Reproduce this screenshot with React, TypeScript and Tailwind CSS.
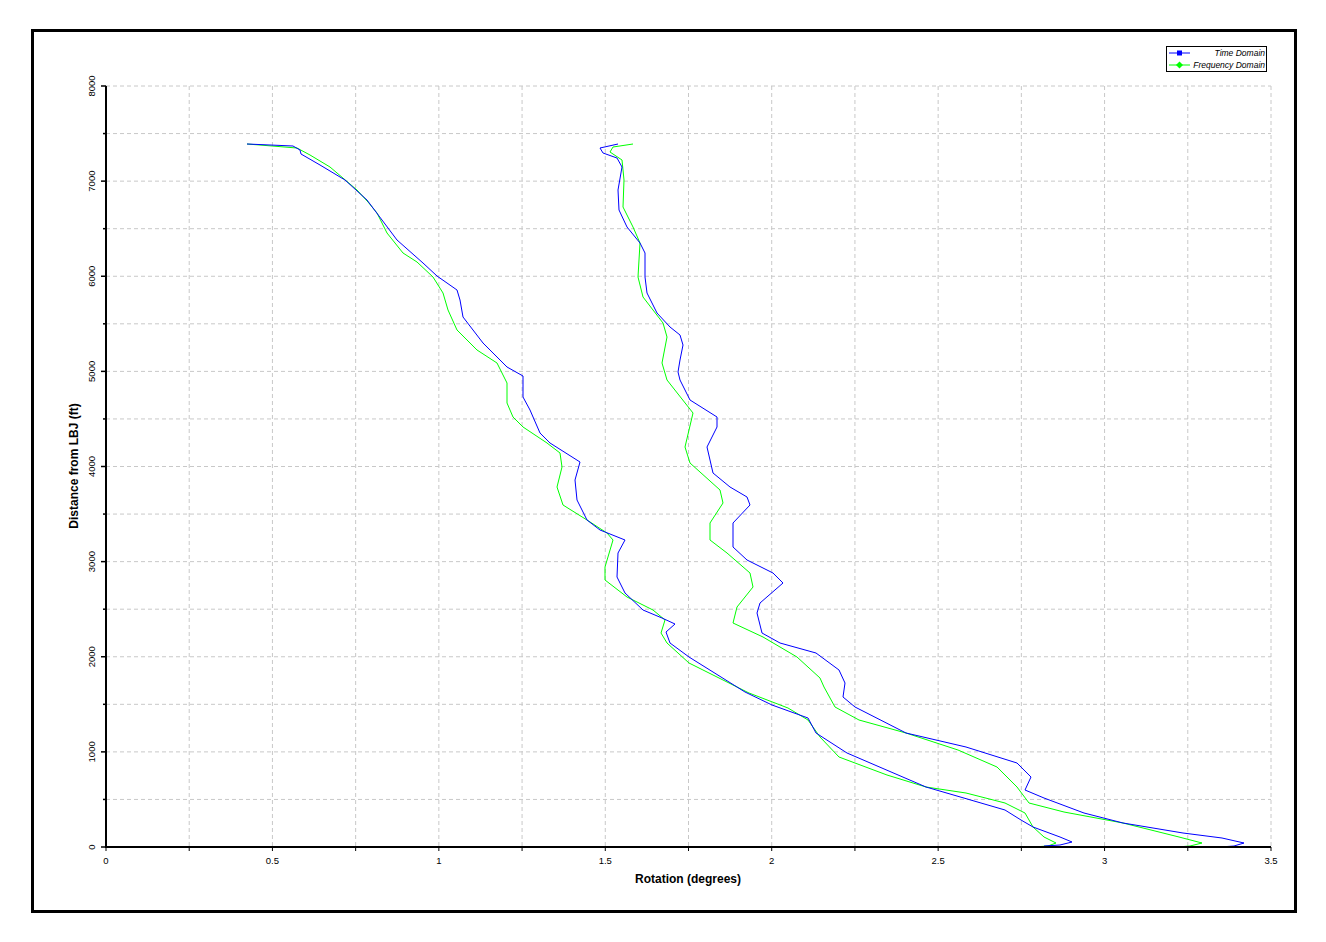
import React from "react";

const X0 = 106, X1 = 1271, Y0 = 847, Y1 = 86;
const xp = (v: number) => X0 + (v / 3.5) * (X1 - X0);
const yp = (v: number) => Y0 - (v / 8000) * (Y0 - Y1);

const blueL = "247,144 293,146 300,150 301,154 320,165 345,180 367,200 382,220 397,240 423,263 437,276 457,290 460,300 463,317 483,343 507,367 523,376 523,397 530,410 540,433 550,443 580,462 575,480 577,500 587,520 600,530 625,540 618,553 617,577 625,593 643,610 662,618 675,624 666,632 670,643 689,657 745,692 772,705 808,718 816,733 847,753 926,787 1005,810 1021,820 1033,827 1060,837 1072,842 1060,845 1044,846";
const greenL = "247,144 297,148 310,155 330,167 357,190 368,202 377,213 387,233 403,253 417,262 433,277 443,293 448,310 457,330 477,350 497,363 507,383 507,403 513,417 523,427 547,443 560,453 562,467 557,487 563,505 587,520 607,533 613,540 605,567 605,580 627,597 653,610 665,620 661,633 667,643 689,663 749,693 788,708 808,720 820,737 839,757 887,775 926,787 966,793 1005,803 1025,813 1033,827 1044,837 1056,843 1048,846 1033,847";
const blueR = "618,144 600,148 603,153 617,158 622,167 618,190 619,210 627,227 640,243 645,253 645,277 647,293 657,313 670,327 680,335 683,345 680,360 678,372 680,380 690,400 717,417 717,427 707,447 713,473 730,487 747,497 750,505 733,523 733,547 747,560 773,573 783,583 760,603 757,613 762,633 780,643 816,653 839,670 845,683 843,697 855,707 906,733 966,747 1017,763 1031,777 1025,790 1044,798 1084,813 1123,823 1183,833 1222,838 1244,843 1234,846 1220,847";
const greenR = "633,144 613,147 610,152 622,160 624,180 623,207 633,227 640,243 638,277 643,297 663,323 667,337 662,363 667,380 693,413 685,447 690,463 720,490 723,503 710,523 710,540 727,553 750,573 753,587 737,607 733,623 763,637 797,657 820,678 824,687 835,707 859,720 906,733 958,750 997,767 1017,787 1029,803 1064,812 1123,823 1179,837 1202,843 1190,846 1177,847";

export default function App() {
  const xs = Array.from({ length: 15 }, (_, i) => i * 0.25);
  const ys = Array.from({ length: 17 }, (_, i) => i * 500);
  const font = "'Liberation Sans', Arial, sans-serif";
  return (
    <div className="w-[1326px] h-[942px] bg-white pt-[29px] pl-[31px]">
      <div className="w-[1266px] h-[884px] border-[3px] border-black">
        <svg width="1260" height="878" viewBox="34 32 1260 878" style={{ fontFamily: font }}>
          {xs.slice(1).map((v) => (
            <line key={"gx" + v} x1={xp(v)} x2={xp(v)} y1={Y1} y2={Y0} stroke="#c8c8c8" strokeDasharray="4 3" />
          ))}
          {ys.slice(1).map((v) => (
            <line key={"gy" + v} x1={X0} x2={X1} y1={yp(v)} y2={yp(v)} stroke="#c8c8c8" strokeDasharray="4 3" />
          ))}
          <polyline points={greenL} fill="none" stroke="#00ff00" strokeWidth="1" />
          <polyline points={blueL} fill="none" stroke="#0000ff" strokeWidth="1" />
          <polyline points={greenR} fill="none" stroke="#00ff00" strokeWidth="1" />
          <polyline points={blueR} fill="none" stroke="#0000ff" strokeWidth="1" />
          <line x1={X0} x2={X0} y1={Y1} y2={Y0 + 1} stroke="#000" strokeWidth="2" />
          <line x1={X0 - 1} x2={X1} y1={Y0} y2={Y0} stroke="#000" strokeWidth="2" />
          {xs.map((v, i) => (
            <line key={"tx" + v} x1={xp(v)} x2={xp(v)} y1={Y0} y2={Y0 + 4} stroke="#000" strokeWidth="1" />
          ))}
          {ys.map((v, i) => (
            <line key={"ty" + v} x1={X0 - (i % 2 === 0 ? 5 : 3)} x2={X0} y1={yp(v)} y2={yp(v)} stroke="#000" strokeWidth="1.5" />
          ))}
          {[0, 0.5, 1, 1.5, 2, 2.5, 3, 3.5].map((v) => (
            <text key={"lx" + v} x={xp(v)} y={Y0 + 17} fontSize="9.5" textAnchor="middle" fill="#000">{v}</text>
          ))}
          {[0, 1000, 2000, 3000, 4000, 5000, 6000, 7000, 8000].map((v) => (
            <text key={"ly" + v} x={0} y={0} fontSize="9.5" textAnchor="middle" fill="#000" transform={`translate(95 ${yp(v)}) rotate(-90)`}>{v}</text>
          ))}
          <text x={688} y={883} fontSize="12" fontWeight="bold" textAnchor="middle" fill="#000">Rotation (degrees)</text>
          <text x={0} y={0} fontSize="12" fontWeight="bold" textAnchor="middle" fill="#000" transform="translate(78 466) rotate(-90)">Distance from LBJ (ft)</text>
          <rect x={1166.5} y={46.5} width={100} height={25} fill="#fff" stroke="#000" strokeWidth="1" />
          <line x1={1169} x2={1190} y1={53} y2={53} stroke="#0000ff" />
          <rect x={1177} y={50.5} width={5} height={5} fill="#0000ff" />
          <line x1={1169} x2={1190} y1={65} y2={65} stroke="#00ff00" />
          <rect x={1177} y={62.5} width={5} height={5} fill="#00ff00" transform="rotate(45 1179.5 65)" />
          <text x={1265} y={56} fontSize="8.5" fontStyle="italic" textAnchor="end" fill="#000">Time Domain</text>
          <text x={1265} y={68} fontSize="8.5" fontStyle="italic" textAnchor="end" fill="#000">Frequency Domain</text>
        </svg>
      </div>
    </div>
  );
}
